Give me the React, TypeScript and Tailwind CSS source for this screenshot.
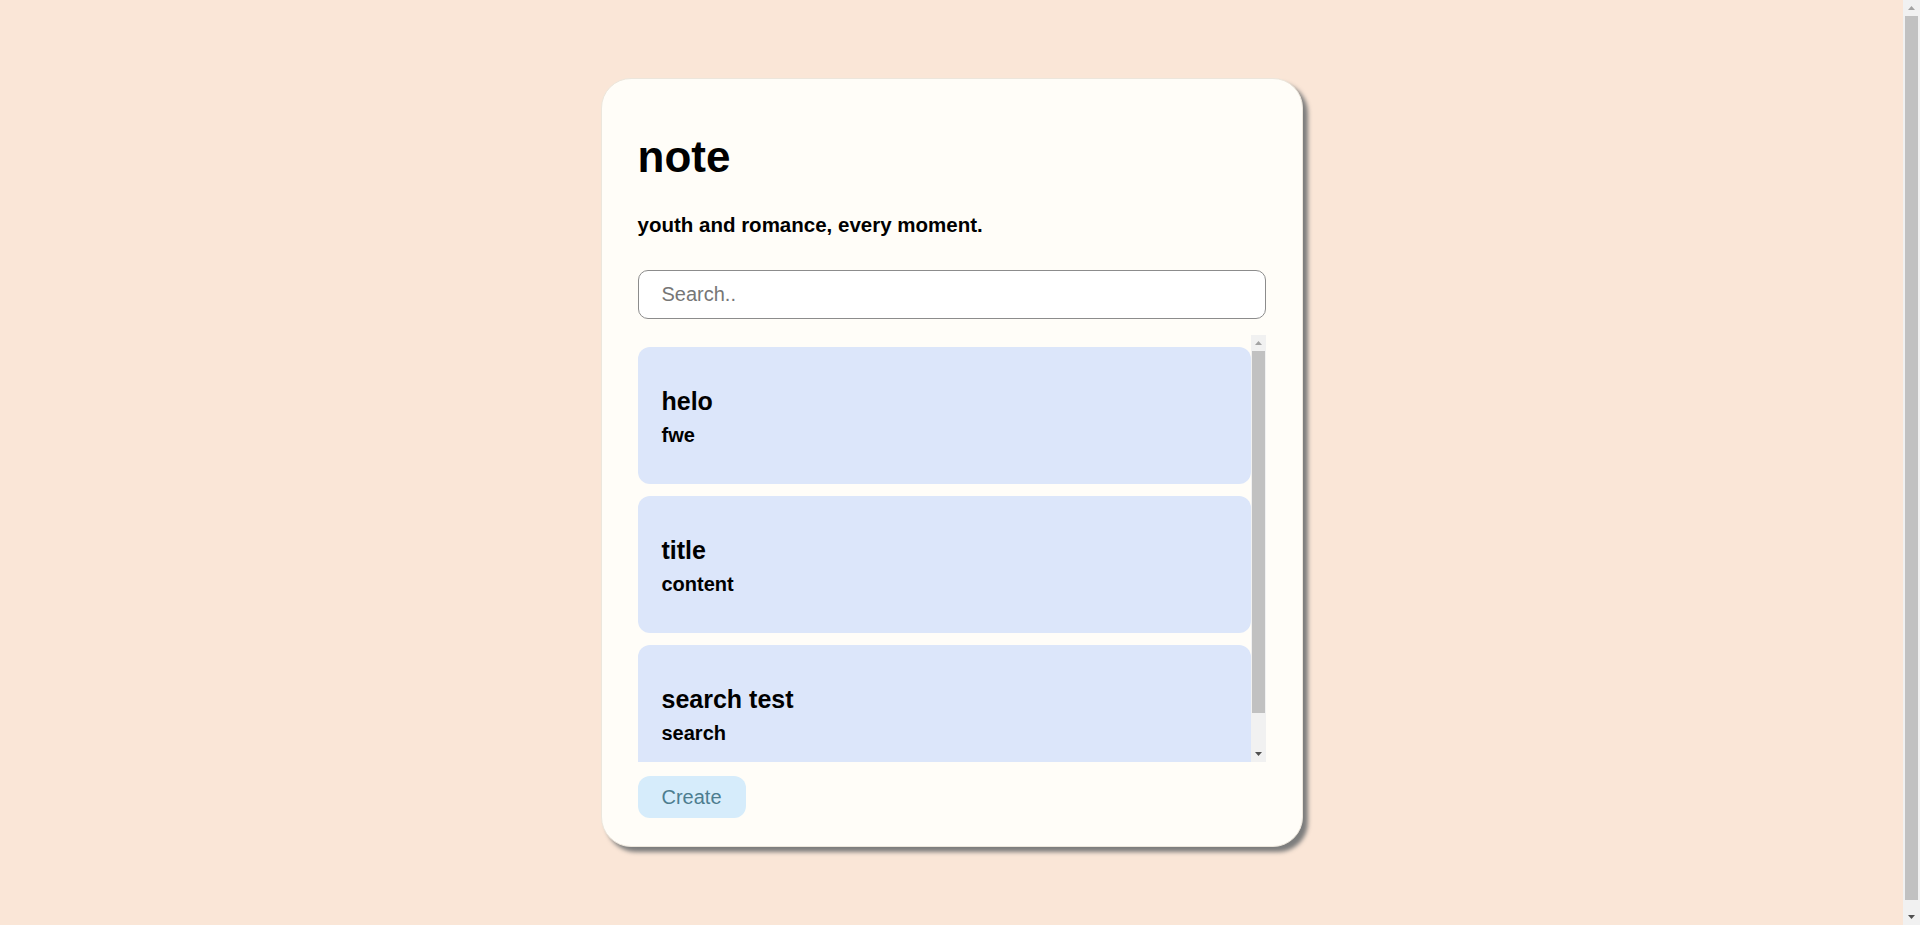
const notes = [
  { title: "helo", content: "fwe" },
  { title: "title", content: "content" },
  { title: "search test", content: "search" },
];

const Arrow = ({ dir, color }: { dir: "up" | "down"; color: string }) => (
  <div className="flex h-[16px] items-center justify-center">
    <svg width="7" height="4" viewBox="0 0 7 4" fill={color}>
      {dir === "up" ? <polygon points="3.5,0 7,4 0,4" /> : <polygon points="0,0 7,0 3.5,4" />}
    </svg>
  </div>
);

// classic scrollbar (arrow, thumb, arrow)
const ScrollBar = ({ barClass, thumbClass }: { barClass: string; thumbClass: string }) => (
  <div className={`flex shrink-0 flex-col bg-[#f1f1f1] ${barClass}`}>
    <Arrow dir="up" color="#a3a3a3" />
    <div className="flex-1">
      <div className={`bg-[#c1c1c1] ${thumbClass}`} />
    </div>
    <Arrow dir="down" color="#505050" />
  </div>
);

const App = () => {
  return (
    <div className="flex h-screen overflow-hidden bg-[#fae6d7] font-['Liberation_Sans',Arial,sans-serif]">
      <div className="flex-1 pt-[78px]">
        <div className="mx-auto w-[702px] rounded-[30px] border border-[#ece6dc] bg-[#fffdf8] px-[36px] pt-[52px] pb-[28px] shadow-[5px_5px_4px_#7d7d7d]">
          {/* Header */}
          <h1 className="text-[44px] leading-[52px] font-bold text-black">note</h1>
          <p className="mt-[28px] text-[20.5px] leading-[28px] font-bold text-black">
            youth and romance, every moment.
          </p>

          {/* Search */}
          <input
            type="text"
            placeholder="Search.."
            className="mt-[31px] block h-[49px] w-full rounded-[10px] border border-[#8c8c8c] bg-white pl-[23px] text-[20px] text-black outline-none placeholder:text-[#767676]"
          />

          {/* Notes list */}
          <div className="mt-[16px] flex h-[427px]">
            <div className="flex-1 overflow-hidden">
              <div className="flex flex-col gap-[12px] pt-[12px]">
                {notes.map((note, index) => (
                  <div
                    key={index}
                    className="rounded-[12px] bg-[#dce6fa] px-[24px] pt-[39px] pb-[37px]"
                  >
                    <h2 className="text-[25px] leading-[30px] font-bold text-black">{note.title}</h2>
                    <p className="mt-[7px] text-[20px] leading-[24px] font-bold text-black">{note.content}</p>
                  </div>
                ))}
              </div>
            </div>
            <ScrollBar barClass="w-[15px] px-[1px]" thumbClass="h-[362px]" />
          </div>

          <button className="mt-[14px] h-[42px] rounded-[12px] bg-[#d6ecfb] px-[24px] text-[20px] text-[#4d7d8f]">
            Create
          </button>
        </div>
      </div>
      <ScrollBar barClass="w-[17px] px-[2px]" thumbClass="h-[884px]" />
    </div>
  );
};

export default App;
